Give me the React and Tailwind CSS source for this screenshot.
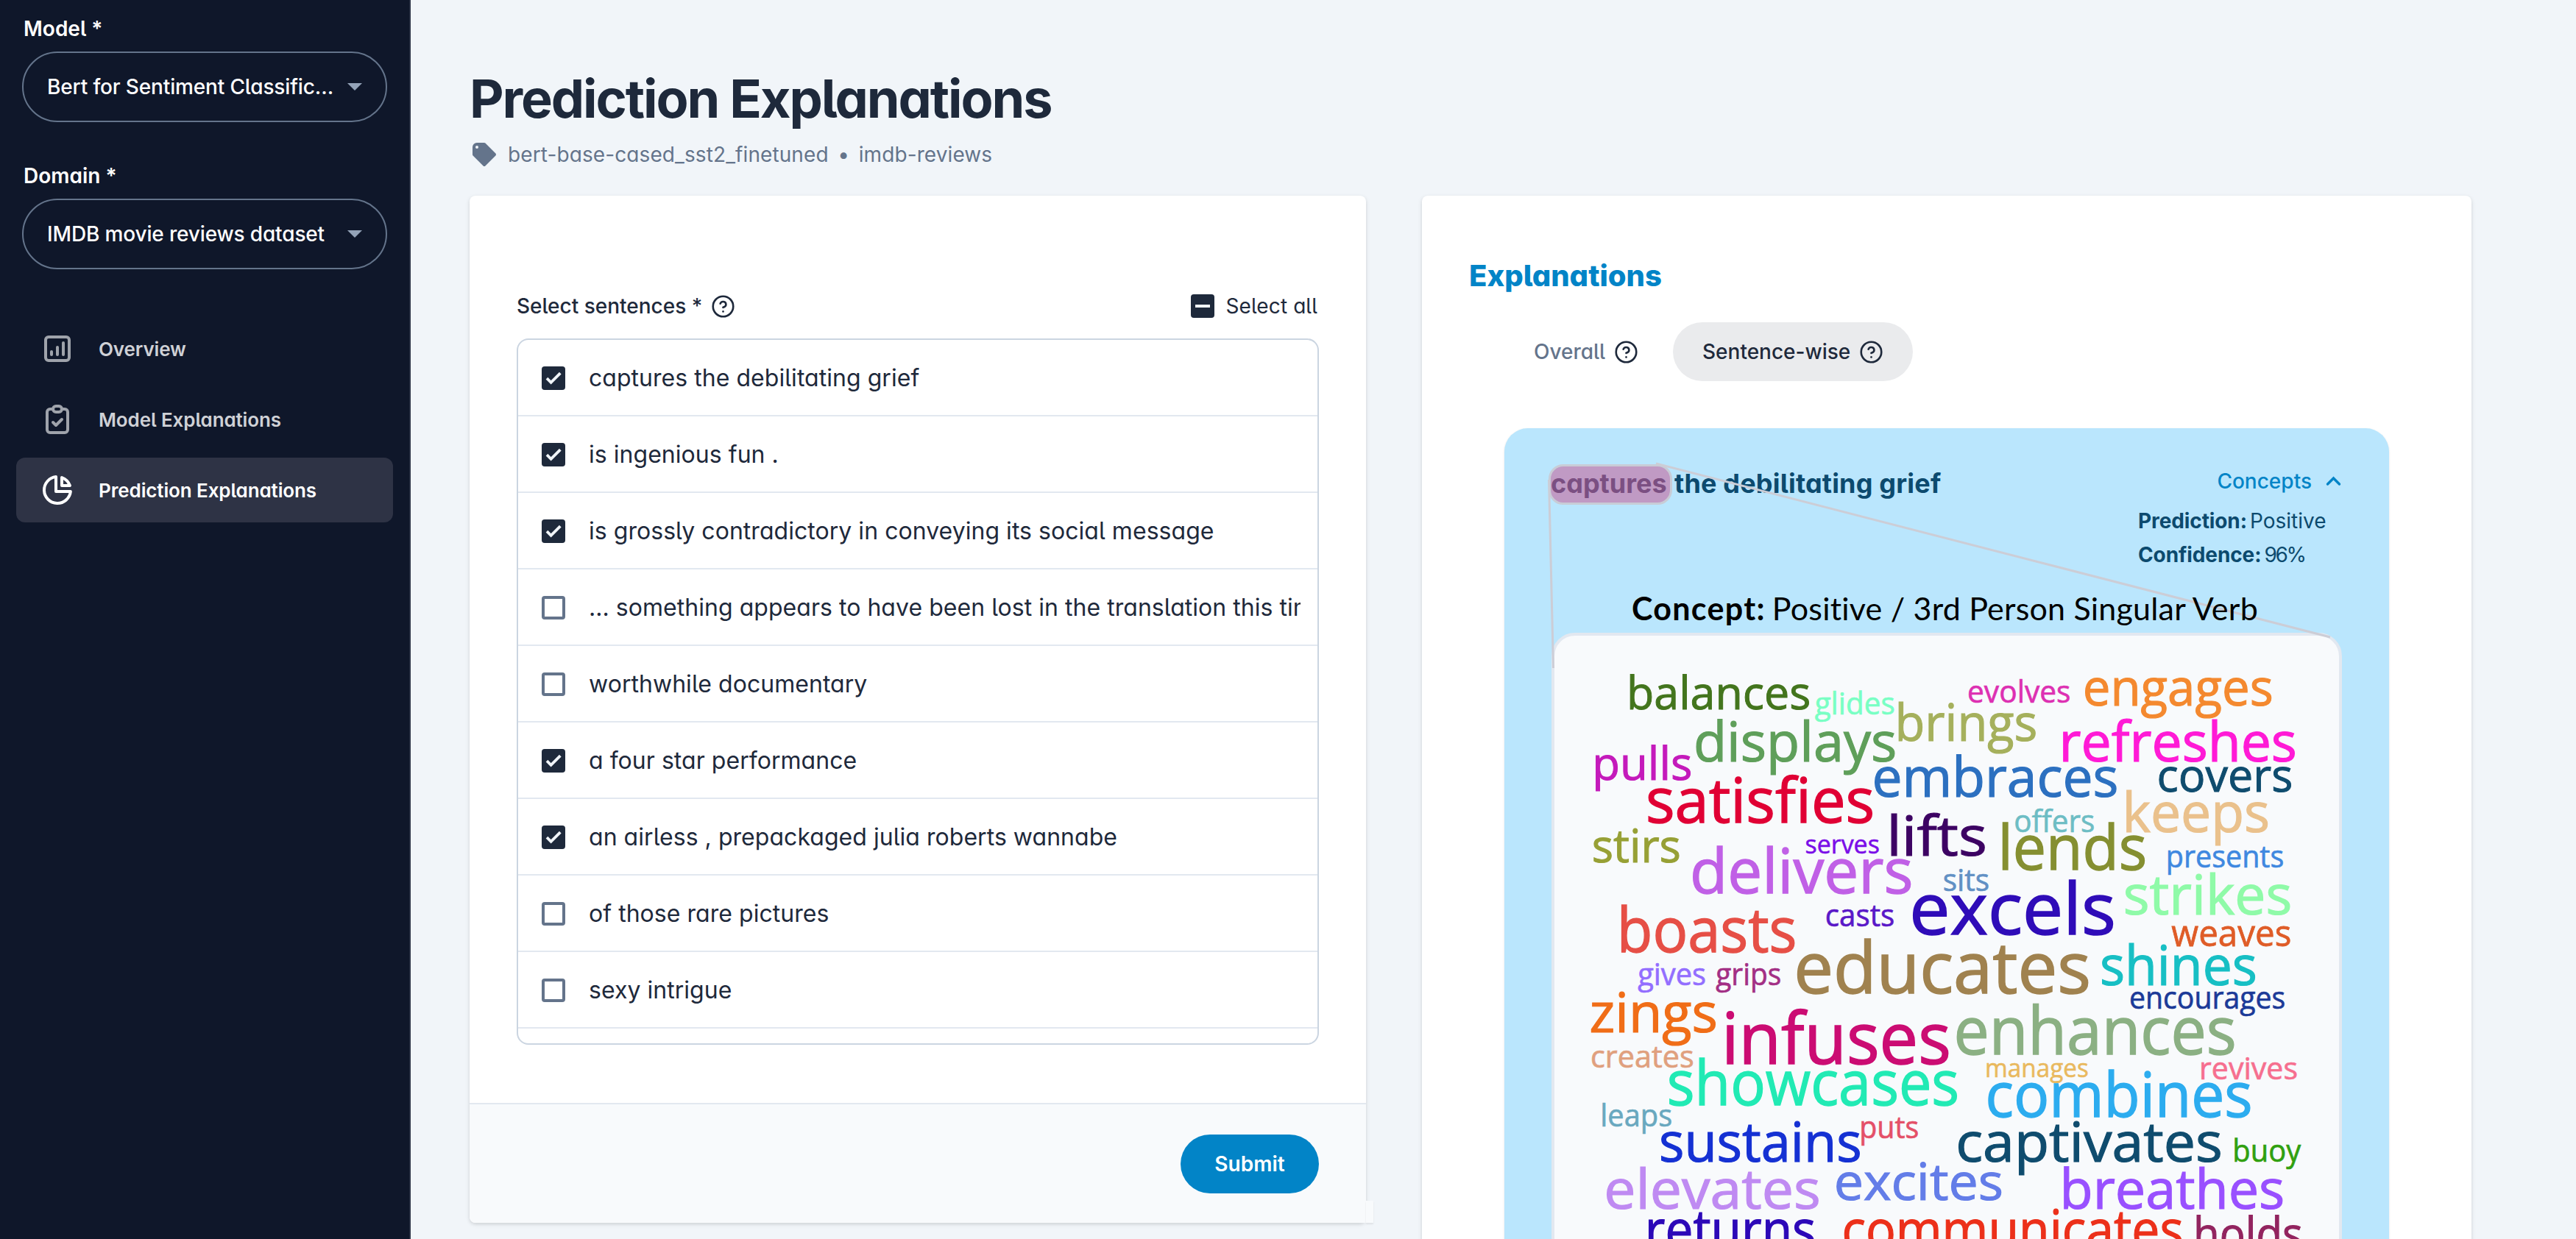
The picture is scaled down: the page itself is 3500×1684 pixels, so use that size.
import React from "react";
import {
  HiTag,
  HiOutlineChartPie,
  HiOutlineChartSquareBar,
  HiOutlineClipboardCheck,
} from "react-icons/hi";

const NAV_ITEMS = [
  { label: "Overview", icon: HiOutlineChartSquareBar },
  { label: "Model Explanations", icon: HiOutlineClipboardCheck },
  { label: "Prediction Explanations", icon: HiOutlineChartPie, active: true },
];

const SENTENCES = [
  { text: "captures the debilitating grief", checked: true },
  { text: "is ingenious fun .", checked: true },
  {
    text: "is grossly contradictory in conveying its social message",
    checked: true,
  },
  {
    text: "... something appears to have been lost in the translation this time",
    checked: false,
  },
  { text: "worthwhile documentary", checked: false },
  { text: "a four star performance", checked: true },
  { text: "an airless , prepackaged julia roberts wannabe", checked: true },
  { text: "of those rare pictures", checked: false },
  { text: "sexy intrigue", checked: false },
];

// [word, left, right, baseline, x-height, color]
const CLOUD = [
  ["balances", 2214.5, 2458.5, 964, 34, "#43751d"],
  ["glides", 2466.5, 2573.5, 970.7, 22.5, "#79ffc4"],
  ["evolves", 2675, 2812.2, 955, 22.5, "#dd30b2"],
  ["engages", 2833, 3086.6, 959, 38, "#f4892f"],
  ["displays", 2304.5, 2575, 1035, 41, "#5f9f5a"],
  ["brings", 2579.5, 2766.3, 1007, 38, "#a5b05c"],
  ["refreshes", 2803, 3118.6, 1035, 41, "#ff1ad6"],
  ["pulls", 2167.7, 2297.5, 1060, 34, "#c41abb"],
  ["satisfies", 2238.7, 2544.7, 1118, 45.5, "#e00034"],
  ["embraces", 2547, 2876.2, 1083, 41, "#2c70c0"],
  ["covers", 2933.6, 3113.5, 1076, 34, "#0f4c6e"],
  ["keeps", 2888.9, 3081.8, 1131, 41, "#eac18c"],
  ["offers", 2738.2, 2845, 1131, 22.5, "#6dbdc4"],
  ["stirs", 2164.7, 2282, 1172, 34, "#97a035"],
  ["serves", 2453.7, 2552.8, 1159.5, 19, "#7a0de8"],
  ["lifts", 2568.7, 2697.5, 1163, 41, "#3d0363"],
  ["lends", 2720.4, 2914.6, 1182, 45.5, "#858f31"],
  ["presents", 2945.8, 3102, 1179, 22.5, "#3f88e0"],
  ["delivers", 2300, 2596.8, 1214, 45.5, "#c060e6"],
  ["sits", 2641, 2701.8, 1210.7, 22.5, "#6190c4"],
  ["casts", 2481.8, 2573, 1258.5, 22.5, "#5a18c8"],
  ["excels", 2599, 2871.9, 1270, 53, "#2f0cb8"],
  ["strikes", 2887.3, 3111.9, 1243, 41, "#8ffaa8"],
  ["boasts", 2202.8, 2438.9, 1294, 45.5, "#e64f46"],
  ["weaves", 2950.6, 3111.9, 1286, 26.5, "#df5c27"],
  ["gives", 2226, 2316.8, 1339, 22.5, "#936eff"],
  ["grips", 2332, 2419, 1339, 22.5, "#a32f85"],
  ["educates", 2441.8, 2838, 1349.7, 53, "#a0824f"],
  ["shines", 2855.5, 3064.5, 1339, 41, "#17bfc4"],
  ["encourages", 2895, 3104, 1370.7, 22.5, "#1c3a98"],
  ["zings", 2162, 2331.6, 1403, 41, "#f06d17"],
  ["infuses", 2346, 2647.9, 1446, 53, "#cb0c73"],
  ["enhances", 2658.8, 3035.9, 1433, 49, "#8bb083"],
  ["creates", 2162.9, 2300.5, 1451, 22.5, "#e0a07e"],
  ["manages", 2699.6, 2836.7, 1464, 19, "#e9b95e"],
  ["revives", 2991, 3120.8, 1466.7, 22.5, "#f66f8f"],
  ["showcases", 2267.6, 2659.6, 1501.7, 45.5, "#21eab4"],
  ["combines", 2701.6, 3058, 1518, 45.5, "#2cacef"],
  ["leaps", 2177.3, 2270.9, 1531, 22.5, "#69a8bf"],
  ["sustains", 2256.5, 2527.3, 1579, 41, "#1531d3"],
  ["puts", 2529.1, 2606, 1546.7, 22.5, "#e45068"],
  ["captivates", 2660.8, 3017.6, 1579, 41, "#0f4c6e"],
  ["buoy", 3036.3, 3124.9, 1579, 22.5, "#30a00f"],
  ["elevates", 2182.8, 2471.4, 1643, 41, "#bf8af2"],
  ["excites", 2495, 2720, 1631, 38, "#637de8"],
  ["breathes", 2804, 3102, 1643, 41, "#9950ff"],
  ["returns", 2240.2, 2465.1, 1698, 41, "#2c08b8"],
  ["communicates", 2506, 2964.5, 1698, 41, "#ec301a"],
  ["holds", 2984.5, 3127, 1699, 34, "#92245f"],
];

// Side bearing of a word's first letter, in em
const bearing = (letter) => {
  if ("bhiklmnpr".includes(letter)) return 0.072;
  if ("cdeo".includes(letter)) return 0.048;
  if ("sz".includes(letter)) return 0.033;
  if (letter === "g") return 0.02;
  return 0.005;
};

const HelpIcon = () => (
  <svg
    width="33"
    height="33"
    viewBox="0 0 24 24"
    fill="none"
    stroke="#1e293b"
    strokeWidth="1.9"
    strokeLinecap="round"
    strokeLinejoin="round"
    className="shrink-0"
  >
    <circle cx="12" cy="12" r="10" />
    <path d="M9.2 9.2a2.9 2.9 0 0 1 5.63.9c0 1.9-2.85 2.85-2.85 2.85" />
    <path d="M12 17h.01" />
  </svg>
);

const Checkbox = ({ checked }) => {
  if (!checked) {
    return (
      <div className="w-8 h-8 shrink-0 rounded-[4px] border-4 border-[#64748b]" />
    );
  }
  return (
    <div className="w-8 h-8 shrink-0 rounded-[4px] bg-[#1e293b]">
      <svg width="32" height="32" viewBox="0 0 32 32" fill="none">
        <path d="M7 16.2l5.6 5.6L25.3 9.1" stroke="#f1f5f9" strokeWidth="3.8" />
      </svg>
    </div>
  );
};

const SelectField = ({ label, value }) => (
  <div>
    <div className="pl-px text-[28px] leading-10 font-semibold text-white">
      {label}
    </div>
    <div className="mt-[11px] -ml-px -mr-px flex h-24 items-center justify-between rounded-full border-2 border-[#64748b] pl-8 pr-8">
      <span className="text-[28px] font-medium text-white whitespace-nowrap tracking-[-0.15px]">
        {value}
      </span>
      <svg width="20" height="10" viewBox="0 0 20 10" className="shrink-0">
        <path d="M0 0h20L10 10z" fill="#94a3b8" />
      </svg>
    </div>
  </div>
);

const Sidebar = () => (
  <aside className="flex w-[558px] shrink-0 flex-col border-r-2 border-[#2b3245] bg-[#0f172a] pt-[19px]">
    <div className="flex flex-col gap-[53px] pl-[31px] pr-[31px]">
      <SelectField label="Model *" value="Bert for Sentiment Classific…" />
      <SelectField label="Domain *" value="IMDB movie reviews dataset" />
    </div>
    <nav className="mt-16 flex flex-col gap-2 px-[22px]">
      {NAV_ITEMS.map(({ label, icon: Icon, active }) => (
        <div
          key={label}
          className={`flex h-[88px] items-center gap-8 rounded-xl pl-8 text-[26px] font-semibold tracking-[-0.12px] ${
            active ? "bg-[#2e3345] text-white" : "text-[#cfd1d6]"
          }`}
        >
          <Icon
            size={48}
            className={active ? "text-white" : "text-[#9fa3ab]"}
          />
          {label}
        </div>
      ))}
    </nav>
  </aside>
);

const SentenceForm = () => (
  <section className="flex h-[1396px] w-[1218px] shrink-0 flex-col rounded-lg bg-white shadow-[0_2px_6px_rgba(0,0,0,0.1),0_2px_4px_rgba(0,0,0,0.06)]">
    <div className="flex flex-1 flex-col px-16 pt-[130px]">
      <div className="flex h-10 items-center justify-between">
        <div className="flex items-center gap-3 text-[28px] font-[550]">
          Select sentences *
          <HelpIcon />
        </div>
        <div className="flex items-center gap-[15px] pr-[2px] text-[28px] tracking-[0.1px]">
          <div className="flex h-8 w-8 items-center justify-center rounded-[4px] bg-[#1e293b]">
            <div className="h-1 w-5 bg-[#f1f5f9]" />
          </div>
          Select all
        </div>
      </div>
      <div className="mt-6 h-[960px] overflow-hidden rounded-2xl border-2 border-[#cbd5e1]">
        {SENTENCES.map(({ text, checked }) => (
          <div
            key={text}
            className="flex h-[104px] items-center gap-8 border-b-2 border-[#e2e8f0] pl-8 pr-[23px] pt-[2px]"
          >
            <Checkbox checked={checked} />
            <span className="overflow-hidden whitespace-nowrap text-[32px] leading-[48px] tracking-[0.04px]">
              {text}
            </span>
          </div>
        ))}
      </div>
    </div>
    <div className="relative flex h-[163px] items-center justify-end rounded-bl-lg border-t-2 border-[#e2e8f0] bg-[#f8fafc] pr-16">
      <button className="h-20 w-[188px] rounded-full bg-[#0284c7] text-[28px] font-semibold text-white">
        Submit
      </button>
      <div className="absolute -right-[10px] bottom-0 h-[30px] w-[10px] bg-[#f8fafc] shadow-[0_2px_2px_rgba(0,0,0,0.08)]" />
    </div>
  </section>
);

const WordCloud = () => (
  <svg
    width="1066"
    height="852"
    viewBox="2112 864 1066 852"
    fontFamily="'Open Sans', 'Noto Sans', sans-serif"
    fontWeight="500"
  >
    {CLOUD.map(([word, left, right, baseline, xHeight, color]) => {
      const size = xHeight / 0.545;
      const lead = size * bearing(word[0]);
      return (
        <text
          key={word}
          x={left - lead}
          y={baseline}
          fontSize={size}
          fill={color}
          stroke={color}
          strokeWidth={size * 0.016}
          textLength={right - left + lead + size * 0.03}
          lengthAdjust="spacingAndGlyphs"
        >
          {word}
        </text>
      );
    })}
  </svg>
);

const ConceptCard = () => (
  <div className="relative mt-16 h-[1200px] w-[1202px] shrink-0 rounded-[32px] bg-[#bae6fd] pt-[49px] shadow">
    <div className="flex justify-between px-[60px] text-[#0c4a6e]">
      <div className="flex items-start text-[36px] font-bold leading-[46px]">
        <span className="h-[55px] w-[168px] rounded-[20px] border-[3px] border-[#c8ccd6] bg-[#c09ac4] text-[#7b4f82]">
          captures
        </span>
        <span className="ml-[3px] pt-[3px] tracking-[0.18px]">
          the debilitating grief
        </span>
      </div>
      <div className="w-[282px] text-[28px] leading-[46px]">
        <div className="mb-2 flex items-center justify-end gap-[15px] font-medium text-[#0284c7]">
          Concepts
          <svg width="30" height="30" viewBox="0 0 30 30" fill="none">
            <path
              d="M6.5 19l8-8 8 8"
              stroke="#0284c7"
              strokeWidth="3.4"
              strokeLinecap="round"
            />
          </svg>
        </div>
        <div className="flex gap-1 pl-px">
          <span className="font-bold tracking-[-0.1px]">Prediction:</span>
          <span>Positive</span>
        </div>
        <div className="flex gap-1 pl-px">
          <span className="font-bold tracking-[-0.1px]">Confidence:</span>
          <span className="tracking-[-2.4px]">96%</span>
        </div>
      </div>
    </div>
    {/* Guide lines from the highlighted token to its word cloud */}
    <svg
      width="1202"
      height="330"
      viewBox="0 0 1202 330"
      className="absolute left-0 top-0 z-10"
      stroke="#cccdd6"
      strokeWidth="3"
    >
      <path d="M60.5 70l6 256" />
      <path d="M206 48l916 236" />
    </svg>
    <div className="relative z-20 mt-[26px] flex gap-[9px] whitespace-nowrap pl-[173px] font-[Lato,sans-serif] text-[43px] leading-[48px] text-black">
      <span className="font-bold tracking-[1.3px]">Concept:</span>
      <span className="tracking-[0.2px]">
        Positive / 3rd Person Singular Verb
      </span>
    </div>
    <div className="mx-16 mt-[9px] h-[880px] overflow-hidden rounded-[32px] border-4 border-[#e2e8f0] bg-[#f8fafc]">
      <WordCloud />
    </div>
  </div>
);

const Explanations = () => (
  <section className="flex h-[1500px] w-[1426px] shrink-0 flex-col rounded-lg bg-white pt-[89px] shadow-[0_2px_6px_rgba(0,0,0,0.1),0_2px_4px_rgba(0,0,0,0.06)]">
    <h2 className="pl-16 text-[40px] font-extrabold leading-10 text-[#0284c7]">
      Explanations
    </h2>
    <div className="mt-[43px] flex gap-2 pl-28 text-[28px] font-[550]">
      <div className="flex h-20 w-[221px] items-center gap-3 pl-10">
        <span className="text-[#64748b]">Overall</span>
        <HelpIcon />
      </div>
      <div className="flex h-20 w-[326px] items-center gap-3 rounded-full bg-[#eaebed] pl-10">
        <span>Sentence-wise</span>
        <HelpIcon />
      </div>
    </div>
    <div className="pl-28">
      <ConceptCard />
    </div>
  </section>
);

export default function App() {
  return (
    <div className="flex h-[1684px] w-[3500px] overflow-hidden bg-[#f1f5f9] font-[Inter,sans-serif] text-[#1e293b] [font-feature-settings:'cv05','cv11']">
      <Sidebar />
      <main className="flex-1 pl-20 pt-[98px]">
        <h1 className="text-[72px] font-bold leading-[72px] tracking-[-2.1px]">
          Prediction Explanations
        </h1>
        <div className="mt-5 flex h-10 items-center text-[28px] tracking-[0.1px] text-[#64748b]">
          <HiTag size={40} />
          <span className="ml-3">bert-base-cased_sst2_finetuned</span>
          <span className="w-[41px] text-center">•</span>
          <span>imdb-reviews</span>
        </div>
        <div className="mt-9 flex gap-[76px]">
          <SentenceForm />
          <Explanations />
        </div>
      </main>
    </div>
  );
}
